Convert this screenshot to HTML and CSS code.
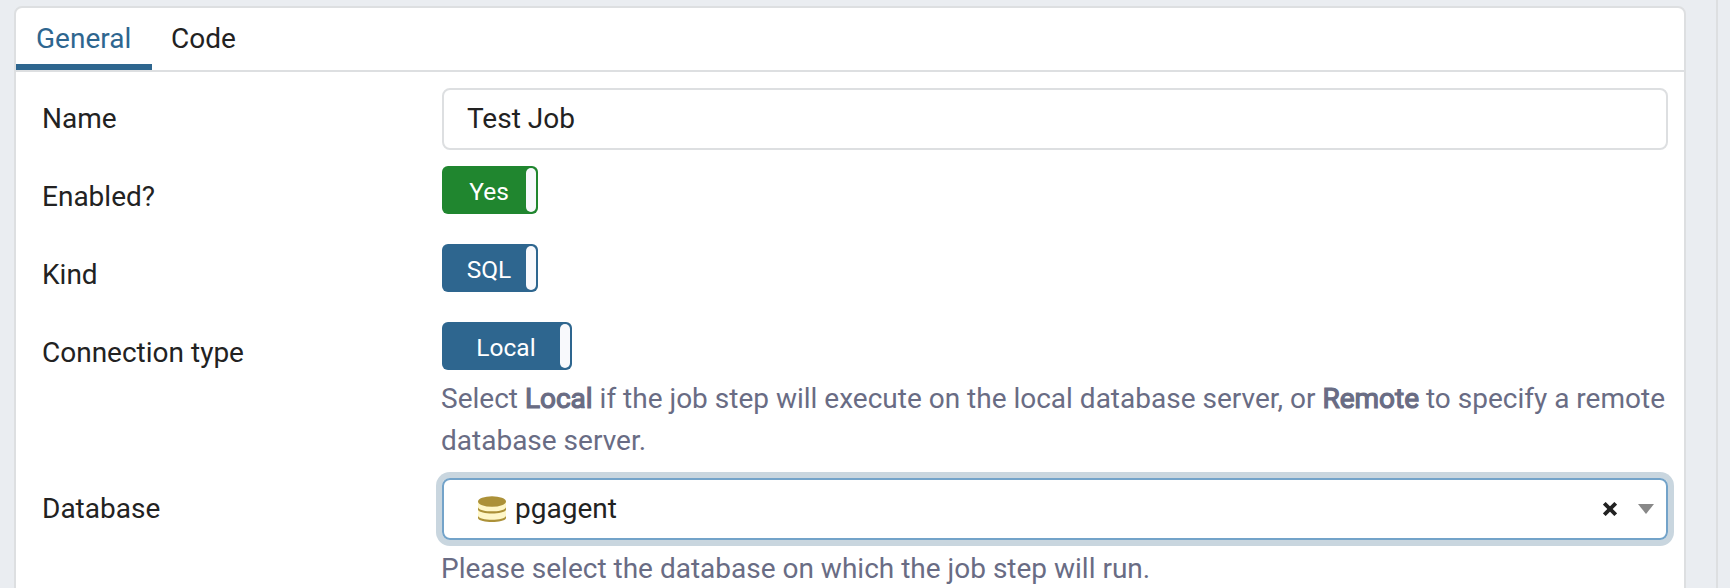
FILE: index.html
```html
<!DOCTYPE html>
<html lang="en">
<head>
<meta charset="utf-8">
<title>Job step</title>
<link rel="stylesheet" href="styles.css">
</head>
<body>
<div class="page">
  <main class="panel">
    <nav class="tabs">
      <a class="tab tab-active">General</a>
      <a class="tab">Code</a>
    </nav>
    <form class="form">
      <div class="row">
        <label class="label">Name</label>
        <div class="field"><div class="input">Test Job</div></div>
      </div>
      <div class="row">
        <label class="label">Enabled?</label>
        <div class="field"><div class="toggle toggle-on"><span class="toggle-text">Yes</span><span class="handle"></span></div></div>
      </div>
      <div class="row">
        <label class="label">Kind</label>
        <div class="field"><div class="toggle"><span class="toggle-text">SQL</span><span class="handle"></span></div></div>
      </div>
      <div class="row">
        <label class="label">Connection type</label>
        <div class="field">
          <div class="toggle toggle-wide"><span class="toggle-text">Local</span><span class="handle"></span></div>
          <p class="help">Select <span class="strong">Local</span> if the job step will execute on the local database server, or <span class="strong">Remote</span> to specify a remote database server.</p>
        </div>
      </div>
      <div class="row">
        <label class="label">Database</label>
        <div class="field">
          <div class="input select">
            <svg class="db-icon" width="28" height="26" viewBox="0 0 28 26">
              <path d="M0 5v15.500c0 6 28 6 28 0V5z" fill="#fff7c8"/>
              <ellipse cx="14" cy="5.500" rx="14" ry="5.300" fill="#ac9138"/>
              <path d="M0 11.300c1 5.400 27 5.400 28 0v2.400c-2 5-26 5-28 0z" fill="#ac9138"/>
              <path d="M0 19.800c1 5.400 27 5.400 28 0v2.400c-2 5-26 5-28 0z" fill="#ac9138"/>
            </svg>
            <span class="value">pgagent</span>
            <svg class="clear" width="14" height="14" viewBox="0 0 14 14"><path d="M1.300 1.300l11.400 11.400M12.700 1.300l-11.400 11.400" stroke="#222" stroke-width="3.800"/></svg>
            <svg class="arrow" width="16" height="10" viewBox="0 0 16 10"><path d="M0 0h16L8 10z" fill="#888"/></svg>
          </div>
          <p class="help">Please select the database on which the job step will run.</p>
        </div>
      </div>
    </form>
  </main>
  <div class="gutter"></div>
</div>
</body>
</html>
```
FILE: styles.css
```css
* { box-sizing: border-box; }
body {
  margin: 0;
  background: #eaedf1;
  color: #222;
  font: 28px/42px Roboto, sans-serif;
}
.page {
  display: flex;
  height: 588px;
  padding-left: 14px;
  overflow: hidden;
}
.panel {
  width: 1672px;
  height: 620px;
  flex: none;
  margin-top: 6px;
  background: #fff;
  border: 2px solid #dddfe1;
  border-radius: 8px;
}
.gutter {
  width: 32px;
  border-right: 2px solid #dddfe1;
}
.tabs {
  display: flex;
  height: 64px;
  border-bottom: 2px solid #dddfe1;
}
.tab {
  padding: 10px 20px 0 19px;
}
.tab-active {
  width: 136px;
  padding-left: 20px;
  color: #2e668f;
  border-bottom: 6px solid #2e668f;
}
.form {
  padding: 16px 16px 0 26px;
}
.row {
  display: flex;
  margin-bottom: 16px;
}
.label {
  width: 400px;
  flex: none;
  padding-top: 10px;
}
.field {
  flex: 1;
  min-height: 62px;
}
.input {
  height: 62px;
  padding: 8px 23px;
  border: 2px solid #dddfe1;
  border-radius: 8px;
}
.toggle {
  display: flex;
  width: 96px;
  height: 48px;
  padding: 2px;
  background: #2e668f;
  border-radius: 6px;
  color: #fff;
  font-size: 24.5px;
  line-height: 48px;
}
.toggle-on { background: #20862f; }
.toggle-wide { width: 130px; }
.toggle-text {
  flex: 1;
  padding-left: 8px;
  text-align: center;
}
.handle {
  width: 10px;
  background: #f8f9fc;
  border-radius: 6px;
}
.help {
  margin: 8px -10px 0 -1px;
  color: #696c84;
}
.strong { -webkit-text-stroke: 1.2px currentColor; }
.select {
  display: flex;
  align-items: center;
  padding: 0 12px 0 34px;
  border-color: #73a3c9;
  box-shadow: 0 0 0 6px #c9d6df;
}
.value {
  flex: 1;
  padding-left: 9px;
}
.clear { margin-right: 21px; }
```
